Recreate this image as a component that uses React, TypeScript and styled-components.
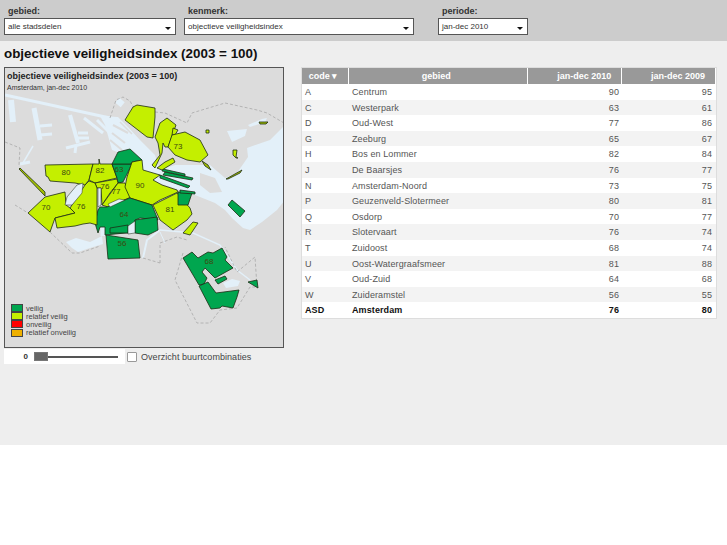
import React, { FC } from "react";
import styled, { createGlobalStyle } from "styled-components";

const GlobalStyle = createGlobalStyle`
  html, body {
    margin: 0;
    padding: 0;
    background: #fff;
    font-family: "Liberation Sans", Arial, sans-serif;
  }
`;

const Page = styled.div`
  width: 727px;
  height: 445px;
  background: #eeeeee;
  opacity: 0.999;
`;

const TopBar = styled.div`
  display: flex;
  height: 41px;
  background: #cccccc;
  box-sizing: border-box;
  padding: 5px 0 0 4px;
`;

const Filter = styled.div<{ $width: number; $gap: number }>`
  width: ${({ $width }) => $width}px;
  margin-right: ${({ $gap }) => $gap}px;
`;

const FilterLabel = styled.div`
  font-size: 9px;
  font-weight: bold;
  line-height: 12px;
  height: 13px;
  padding-left: 4px;
  color: #333;
`;

const Select = styled.div`
  display: flex;
  align-items: center;
  justify-content: space-between;
  height: 17px;
  box-sizing: border-box;
  background: #fff;
  border: 1px solid #555;
  padding: 0 4px 0 3px;
  font-size: 8px;
  color: #333;
`;

const Caret = styled.span`
  width: 0;
  height: 0;
  margin-top: 3px;
  border-left: 3px solid transparent;
  border-right: 3px solid transparent;
  border-top: 3px solid #111;
`;

const Title = styled.h1`
  margin: 0;
  padding: 4px 0 0 4px;
  height: 22px;
  box-sizing: content-box;
  font-size: 13.4px;
  line-height: 17px;
  font-weight: bold;
  color: #111;
`;

const Content = styled.div`
  display: flex;
  align-items: flex-start;
  padding-left: 4px;
`;

const LeftColumn = styled.div`
  width: 280px;
  margin-right: 17px;
`;

const MapPanel = styled.div`
  position: relative;
  width: 280px;
  height: 281px;
  box-sizing: border-box;
  border: 1px solid #555;
  background: #dcdcdc;
  overflow: hidden;
`;

const MapSvg = styled.svg`
  position: absolute;
  left: -1px;
  top: -1px;
`;

const MapHeading = styled.div`
  position: relative;
  padding: 3px 0 0 2px;
`;

const MapTitle = styled.div`
  font-size: 9px;
  line-height: 11px;
  font-weight: bold;
  color: #222;
`;

const MapSubtitle = styled.div`
  font-size: 7px;
  line-height: 11px;
  color: #333;
`;

const Legend = styled.div`
  position: absolute;
  left: 6px;
  top: 236px;
`;

const LegendRow = styled.div`
  display: flex;
  align-items: center;
  height: 8.2px;
  font-size: 7.5px;
  color: #444;
`;

const Swatch = styled.span<{ $color: string }>`
  width: 10px;
  height: 6px;
  margin-right: 3px;
  border: 1px solid #444;
  background: ${({ $color }) => $color};
`;

const Controls = styled.div`
  display: flex;
  align-items: center;
  height: 15px;
  margin-top: 1px;
`;

const SliderBox = styled.div`
  display: flex;
  align-items: center;
  width: 121px;
  height: 15px;
  background: #fff;
`;

const SliderValue = styled.span`
  width: 24px;
  text-align: right;
  font-size: 8px;
  font-weight: bold;
  color: #333;
`;

const SliderTrack = styled.div`
  display: flex;
  align-items: center;
  width: 84px;
  height: 2px;
  margin-left: 6px;
  background: #555;
`;

const SliderHandle = styled.div`
  width: 14px;
  height: 9px;
  box-sizing: border-box;
  background: #666;
  border: 1px solid #777;
`;

const Checkbox = styled.span`
  width: 10px;
  height: 10px;
  box-sizing: border-box;
  margin: 0 4px 0 2px;
  background: #fff;
  border: 1px solid #999;
  border-radius: 1px;
`;

const CheckLabel = styled.span`
  font-size: 9px;
  color: #444;
  letter-spacing: 0.05px;
`;

const Table = styled.div`
  width: 416px;
  box-sizing: border-box;
  border: 1px solid #dddddd;
  background: #fff;
`;

const HeadRow = styled.div`
  display: flex;
  height: 16px;
  background: #fff;
`;

const HeadCell = styled.div<{ $width: number; $align: string }>`
  width: ${({ $width }) => $width}px;
  margin-right: 1px;
  box-sizing: border-box;
  padding: 0 10px 0 6px;
  background: #999999;
  color: #fff;
  font-size: 9px;
  font-weight: bold;
  line-height: 16px;
  letter-spacing: 0;
  text-align: ${({ $align }) => $align};
`;

const Row = styled.div<{ $odd: boolean; $total: boolean }>`
  display: flex;
  height: 15.6px;
  line-height: 17px;
  font-size: 9px;
  letter-spacing: 0.1px;
  background: ${({ $odd }) => ($odd ? "#f3f3f3" : "#fff")};
  color: ${({ $total }) => ($total ? "#111" : "#555")};
  font-weight: ${({ $total }) => ($total ? "bold" : "normal")};
`;

const Cell = styled.div<{ $width: number; $right?: boolean }>`
  width: ${({ $width }) => $width}px;
  box-sizing: border-box;
  padding: 0 4px 0 3px;
  text-align: ${({ $right }) => ($right ? "right" : "left")};
`;

const DISTRICT = "#00a64f";
const LIME = "#c4ef00";

const LAND = "#dcdcdc";
const WATER = "#e3f0f9";
const BORDER = "#a8a8a8";

const waterAreas = [
  "100,116 118,117 128,127 140,140 155,155 160,170 175,165 200,165 210,165 225,178 237,173 248,157 247,148 270,140 285,125 285,200 277,210 262,222 250,230 243,228 232,218 225,210 215,203 195,195 150,180 125,155 112,150 105,125",
  "66,242 76,238 90,242 102,236 103,244 90,248 78,252 72,248",
  "223,283 232,279 240,281 238,286 226,288",
  "227,131 247,129 245,136 232,142",
  "248,125 262,119 267,118 265,122 250,127",
];

const waterLines = [
  { points: "5,95 110,118", width: 3 },
  { points: "11,100 13,122", width: 6 },
  { points: "34,108 40,140", width: 5 },
  { points: "40,126 52,125", width: 3 },
  { points: "40,135 52,134", width: 3 },
  { points: "33,146 23,163", width: 1.5 },
  { points: "20,164 30,162", width: 3 },
  { points: "70,115 78,143", width: 4 },
  { points: "78,133 88,133", width: 3 },
  { points: "78,138 89,138", width: 3 },
  { points: "66,148 90,142", width: 3 },
  { points: "76,145 75,153", width: 3 },
  { points: "84,118 103,133", width: 3 },
  { points: "97,120 110,133", width: 3 },
  { points: "118,105 122,100", width: 7 },
  { points: "160,230 193,233 220,245 237,270 250,280", width: 1.5 },
  { points: "160,230 147,240 143,258", width: 2 },
  { points: "160,232 165,243", width: 1 },
  { points: "103,226 103,236", width: 5 },
];

// piers and islands lying in the harbour water
const piers = [
  { points: "113,125 128,133", width: 2 },
  { points: "112,133 125,143", width: 2 },
  { points: "110,140 122,150", width: 2 },
  { points: "120,122 132,134", width: 1.5 },
];

const islands = ["200,173 215,178 222,192 210,193 200,185"];

const boundaries = [
  "5,142 20,148 19,165",
  "15,205 28,213",
  "50,232 72,253 80,253 100,246",
  "110,118 116,100 123,97 130,101 135,110 165,113 187,123 192,113 225,103 257,110 267,113 284,123",
  "160,263 160,243 177,237 187,240",
  "143,258 160,263",
  "183,253 175,280 197,323 210,323 220,310 237,308 250,287 257,287 255,257 237,272 225,247",
];

const greenAreas = [
  { points: "45,165 93,164 89,180 85,185 75,183 50,181 48,177 46,176", fill: LIME },
  { points: "93,164 99,164 99,159 100,164 112,164 117,178 95,183 89,180", fill: LIME },
  { points: "112,164 132,164 123,182 118,183 117,178", fill: DISTRICT },
  { points: "95,183 117,179 118,183 110,193 102,205 101,188 97,188", fill: LIME },
  { points: "118,183 125,183 131,197 108,207 102,205", fill: LIME },
  { points: "118,152 130,149 142,160 132,162 131,164 112,164", fill: DISTRICT },
  { points: "132,162 142,160 143,170 160,175 153,180 162,185 177,190 178,192 160,200 152,205 130,198 125,187 127,177", fill: LIME },
  { points: "98,210 100,207 107,207 130,198 152,205 158,220 140,218 135,220 135,232 105,235 105,227 100,227 98,233 95,223", fill: DISTRICT },
  { points: "135,220 157,217 158,230 148,235 135,233", fill: DISTRICT },
  { points: "110,228 128,225 128,233 110,233", fill: DISTRICT },
  { points: "153,205 177,193 190,208 192,214 187,220 173,230 160,220", fill: LIME },
  { points: "183,233 193,222 198,223 190,235", fill: LIME },
  { points: "178,192 192,193 188,205 178,205", fill: DISTRICT },
  { points: "165,172 193,178 192,180 163,175", fill: DISTRICT },
  { points: "160,175 190,186 188,188 160,178", fill: DISTRICT },
  { points: "163,169 185,174 185,176 162,171", fill: DISTRICT },
  { points: "180,190 195,192 195,194 180,193", fill: DISTRICT },
  { points: "106,235 138,240 140,258 108,259", fill: DISTRICT },
  { points: "28,213 45,197 65,192 66,205 70,208 75,213 55,218 50,232", fill: LIME },
  { points: "70,208 85,185 89,181 95,183 97,188 97,225 90,223 83,224 75,226 57,228 55,218 75,213", fill: LIME },
  { points: "19,169 20,168 45,192 45,196", fill: "#a6c400" },
  { points: "125,120 133,107 137,105 155,108 155,117 153,138 147,137", fill: LIME },
  { points: "167,118 176,125 168,147 165,147 163,143 162,153 155,168 152,165 160,155 158,143 155,137 160,123", fill: LIME },
  { points: "173,128 178,130 175,135 172,135", fill: LIME },
  { points: "172,135 185,132 200,140 208,155 200,162 187,160 175,155 168,147", fill: LIME },
  { points: "173,158 175,162 162,170 157,168 165,162", fill: LIME },
  { points: "202,161 208,165 211,170 205,166", fill: "#a6c400" },
  { points: "206,130 209,130 209,133 206,133", fill: LIME },
  { points: "233,150 237,150 236,157 238,158 236,158 233,155", fill: LIME },
  { points: "226,179 242,170 240,173 228,179", fill: "#a6c400" },
  { points: "259,122 268,122 266,124 260,124", fill: "#a6c400" },
  { points: "228,205 232,200 245,211 240,217", fill: DISTRICT },
  { points: "183,258 192,252 198,258 208,252 213,253 222,248 227,257 225,260 233,268 215,278 205,268 202,272 207,278 204,284 199,285", fill: DISTRICT },
  { points: "199,286 208,282 216,293 239,290 237,297 233,308 222,306 220,308 211,309", fill: DISTRICT },
  { points: "215,280 225,276 227,279 218,284", fill: DISTRICT },
  { points: "248,282 257,280 258,288", fill: DISTRICT },
];

// water that cuts into the districts
const waterNotches = [
  "65,205 67,197 77,185 83,183 82,193 72,205",
  "98,188 101,188 101,205 98,207",
  "128,226 135,221 135,233 128,234",
  "110,207 125,200 119,199 108,204",
];

const mapLabels = [
  { text: "80", x: 66, y: 175 },
  { text: "82", x: 100, y: 173 },
  { text: "63", x: 119, y: 172 },
  { text: "76", x: 105, y: 189 },
  { text: "77", x: 116, y: 194 },
  { text: "90", x: 140, y: 188 },
  { text: "64", x: 124, y: 217 },
  { text: "81", x: 170, y: 212 },
  { text: "73", x: 178, y: 149 },
  { text: "70", x: 46, y: 210 },
  { text: "76", x: 81, y: 209 },
  { text: "56", x: 122, y: 246 },
  { text: "68", x: 209, y: 264 },
];

const legendItems = [
  { label: "veilig", color: DISTRICT },
  { label: "relatief veilig", color: LIME },
  { label: "onveilig", color: "#ff0000" },
  { label: "relatief onveilig", color: "#eeb000" },
];

const columns = [
  { title: "code ▾", width: 46, align: "center" },
  { title: "gebied", width: 179, align: "center" },
  { title: "jan-dec 2010", width: 93, align: "right" },
  { title: "jan-dec 2009", width: 93, align: "right" },
];

const rows: [string, string, number, number][] = [
  ["A", "Centrum", 90, 95],
  ["C", "Westerpark", 63, 61],
  ["D", "Oud-West", 77, 86],
  ["G", "Zeeburg", 65, 67],
  ["H", "Bos en Lommer", 82, 84],
  ["J", "De Baarsjes", 76, 77],
  ["N", "Amsterdam-Noord", 73, 75],
  ["P", "Geuzenveld-Slotermeer", 80, 81],
  ["Q", "Osdorp", 70, 77],
  ["R", "Slotervaart", 76, 74],
  ["T", "Zuidoost", 68, 74],
  ["U", "Oost-Watergraafsmeer", 81, 88],
  ["V", "Oud-Zuid", 64, 68],
  ["W", "Zuideramstel", 56, 55],
  ["ASD", "Amsterdam", 76, 80],
];

const CityMap: FC = () => (
  <MapSvg width="280" height="281" viewBox="4 67 280 281">
    {waterAreas.map((points) => (
      <polygon key={points} points={points} fill={WATER} />
    ))}
    {waterLines.map((line) => (
      <polyline
        key={line.points}
        points={line.points}
        fill="none"
        stroke={WATER}
        strokeWidth={line.width}
      />
    ))}
    {piers.map((pier) => (
      <polyline
        key={pier.points}
        points={pier.points}
        fill="none"
        stroke={LAND}
        strokeWidth={pier.width}
      />
    ))}
    {islands.map((points) => (
      <polygon key={points} points={points} fill={LAND} />
    ))}
    {boundaries.map((points) => (
      <polyline
        key={points}
        points={points}
        fill="none"
        stroke={BORDER}
        strokeWidth="0.8"
        strokeDasharray="3 2"
      />
    ))}
    {greenAreas.map((area) => (
      <polygon
        key={area.points}
        points={area.points}
        fill={area.fill}
        stroke="#1d2b14"
        strokeWidth="0.8"
        strokeLinejoin="round"
      />
    ))}
    {waterNotches.map((points) => (
      <polygon key={points} points={points} fill={WATER} stroke="#1d2b14" strokeWidth="0.5" />
    ))}
    {mapLabels.map((label) => (
      <text
        key={`${label.text}-${label.x}`}
        x={label.x}
        y={label.y}
        fontSize="8"
        fontFamily="Liberation Sans, Arial, sans-serif"
        textAnchor="middle"
        fill="#3c4a10"
      >
        {label.text}
      </text>
    ))}
  </MapSvg>
);

export default function App() {
  return (
    <Page>
      <GlobalStyle />
      <TopBar>
        <Filter $width={172} $gap={8}>
          <FilterLabel>gebied:</FilterLabel>
          <Select>
            alle stadsdelen
            <Caret />
          </Select>
        </Filter>
        <Filter $width={230} $gap={24}>
          <FilterLabel>kenmerk:</FilterLabel>
          <Select>
            objectieve veiligheidsindex
            <Caret />
          </Select>
        </Filter>
        <Filter $width={90} $gap={0}>
          <FilterLabel>periode:</FilterLabel>
          <Select>
            jan-dec 2010
            <Caret />
          </Select>
        </Filter>
      </TopBar>
      <Title>objectieve veiligheidsindex (2003 = 100)</Title>
      <Content>
        <LeftColumn>
          <MapPanel>
            <CityMap />
            <MapHeading>
              <MapTitle>objectieve veiligheidsindex (2003 = 100)</MapTitle>
              <MapSubtitle>Amsterdam, jan-dec 2010</MapSubtitle>
            </MapHeading>
            <Legend>
              {legendItems.map((item) => (
                <LegendRow key={item.label}>
                  <Swatch $color={item.color} />
                  {item.label}
                </LegendRow>
              ))}
            </Legend>
          </MapPanel>
          <Controls>
            <SliderBox>
              <SliderValue>0</SliderValue>
              <SliderTrack>
                <SliderHandle />
              </SliderTrack>
            </SliderBox>
            <Checkbox />
            <CheckLabel>Overzicht buurtcombinaties</CheckLabel>
          </Controls>
        </LeftColumn>
        <Table>
          <HeadRow>
            {columns.map((col) => (
              <HeadCell key={col.title} $width={col.width} $align={col.align}>
                {col.title}
              </HeadCell>
            ))}
          </HeadRow>
          {rows.map(([code, name, current, previous], i) => (
            <Row key={code} $odd={i % 2 === 1} $total={code === "ASD"}>
              <Cell $width={47}>{code}</Cell>
              <Cell $width={180}>{name}</Cell>
              <Cell $width={94} $right>
                {current}
              </Cell>
              <Cell $width={93} $right>
                {previous}
              </Cell>
            </Row>
          ))}
        </Table>
      </Content>
    </Page>
  );
}
